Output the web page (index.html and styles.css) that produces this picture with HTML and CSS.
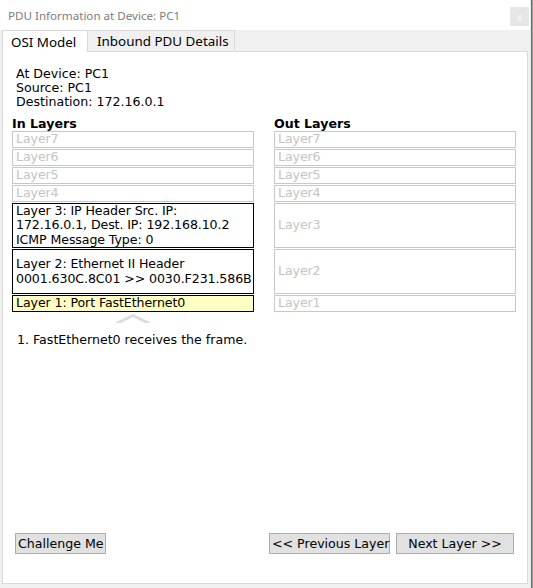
FILE: index.html
```html
<!DOCTYPE html>
<html>
<head>
<meta charset="utf-8">
<link rel="stylesheet" href="styles.css">
</head>
<body>
<div class="screen">
  <div class="window">
    <div class="titlebar">
      <span class="title">PDU Information at Device: PC1</span>
      <span class="close">x</span>
    </div>
    <div class="tabs">
      <div class="tab active">OSI Model</div>
      <div class="tab inbound">Inbound PDU Details</div>
    </div>
    <div class="panel">
      <div class="info">At Device: PC1<br>Source: PC1<br>Destination: 172.16.0.1</div>
      <div class="columns">
        <div class="col">
          <div class="col-title">In Layers</div>
          <div class="layer">Layer7</div>
          <div class="layer">Layer6</div>
          <div class="layer">Layer5</div>
          <div class="layer">Layer4</div>
          <div class="layer big on">Layer 3: IP Header Src. IP:<br>172.16.0.1, Dest. IP: 192.168.10.2<br>ICMP Message Type: 0</div>
          <div class="layer big on">Layer 2: Ethernet II Header<br>0001.630C.8C01 &gt;&gt; 0030.F231.586B</div>
          <div class="layer on current">Layer 1: Port FastEthernet0</div>
          <div class="chevron">
            <svg width="34" height="10" viewBox="0 0 34 10"><polygon points="0,9 17,1 34,9 34,10 0,10" fill="#dcdcdc"/><polygon points="5,10 17,4 29,10" fill="#ffffff"/></svg>
          </div>
        </div>
        <div class="col">
          <div class="col-title">Out Layers</div>
          <div class="layer">Layer7</div>
          <div class="layer">Layer6</div>
          <div class="layer">Layer5</div>
          <div class="layer">Layer4</div>
          <div class="layer big">Layer3</div>
          <div class="layer big">Layer2</div>
          <div class="layer">Layer1</div>
        </div>
      </div>
      <div class="desc">1. FastEthernet0 receives the frame.</div>
      <div class="buttons">
        <button class="btn challenge">Challenge Me</button>
        <div class="nav">
          <button class="btn prev">&lt;&lt; Previous Layer</button>
          <button class="btn next">Next Layer &gt;&gt;</button>
        </div>
      </div>
    </div>
  </div>
  <div class="edge"></div>
</div>
</body>
</html>
```
FILE: styles.css
```css
html, body {
  margin: 0;
  padding: 0;
}
body {
  width: 533px;
  height: 588px;
  overflow: hidden;
  background: #f0f0f0;
  font-family: "DejaVu Sans", Verdana, sans-serif;
}
.screen {
  display: flex;
  height: 588px;
}
.window {
  width: 530px;
  display: flex;
  flex-direction: column;
  background: #f0f0f0;
}
.edge {
  width: 3px;
  background: linear-gradient(to right, #e8e8e8 0, #e8e8e8 1px, #6e6e6e 1px, #6e6e6e 2px, #9a9a9a 2px);
}
.titlebar {
  height: 30px;
  background: #ffffff;
  display: flex;
  justify-content: space-between;
  align-items: center;
  padding: 0 1px 0 8px;
}
.title {
  font-family: "Noto Sans", sans-serif;
  font-size: 11.6px;
  color: #7c7c7c;
}
.close {
  align-self: flex-start;
  margin-top: 7px;
  width: 19px;
  height: 19px;
  background: #e6e6e6;
  color: #fafafa;
  font-family: "Noto Sans", sans-serif;
  font-size: 11px;
  display: flex;
  align-items: center;
  justify-content: center;
}
.tabs {
  height: 21px;
  display: flex;
  align-items: flex-end;
  padding-left: 2px;
  position: relative;
  z-index: 1;
}
.tab {
  box-sizing: border-box;
  height: 20px;
  border: 1px solid #d9d9d9;
  border-bottom: none;
  border-left: none;
  background: #f0f0f0;
  font-family: "Noto Sans", sans-serif;
  font-size: 13.4px;
  color: #000;
  display: flex;
  align-items: center;
  margin-bottom: 1px;
}
.tab.active {
  width: 86px;
  height: 22px;
  padding-left: 8px;
  background: #ffffff;
  border-left: 1px solid #d9d9d9;
  margin-bottom: -1px;
}
.tab.inbound {
  width: 147px;
  padding-left: 9px;
}
.panel {
  margin: 0 2px;
  height: 533px;
  box-sizing: border-box;
  border: 1px solid #d9d9d9;
  background: #ffffff;
  display: flex;
  flex-direction: column;
  padding: 15px 0 0 9px;
  font-size: 12.6px;
  color: #000;
}
.info {
  line-height: 14px;
  padding-left: 4px;
}
.columns {
  display: flex;
  gap: 20px;
  margin-top: 8px;
}
.col {
  width: 242px;
  display: flex;
  flex-direction: column;
}
.col-title {
  font-weight: bold;
  line-height: 14px;
}
.layer {
  box-sizing: border-box;
  height: 17px;
  margin-bottom: 1px;
  border: 1px solid #c8c8c8;
  color: #c4c4c4;
  padding: 0 3px;
  display: flex;
  align-items: center;
  line-height: 14.5px;
  white-space: nowrap;
  letter-spacing: -0.1px;
}
.layer.big {
  height: 45px;
}
.layer.on {
  border-color: #000;
  color: #000;
}
.layer.current {
  background: #ffffc4;
}
.chevron {
  display: flex;
  justify-content: center;
  height: 10px;
}
.chevron svg {
  display: block;
}
.desc {
  margin-top: 10px;
  padding-left: 5px;
  line-height: 14px;
}
.buttons {
  margin-top: auto;
  margin-bottom: 29px;
  display: flex;
  justify-content: space-between;
  padding: 0 13px 0 3px;
}
.nav {
  display: flex;
  gap: 6px;
}
.btn {
  box-sizing: border-box;
  height: 21px;
  margin: 0;
  padding: 0 2px;
  border: 1px solid #adadad;
  background: #e1e1e1;
  font-family: "DejaVu Sans", Verdana, sans-serif;
  font-size: 12.6px;
  color: #000;
  white-space: nowrap;
}
.btn.challenge { width: 91px; }
.btn.prev { width: 121px; }
.btn.next { width: 118px; }
```
